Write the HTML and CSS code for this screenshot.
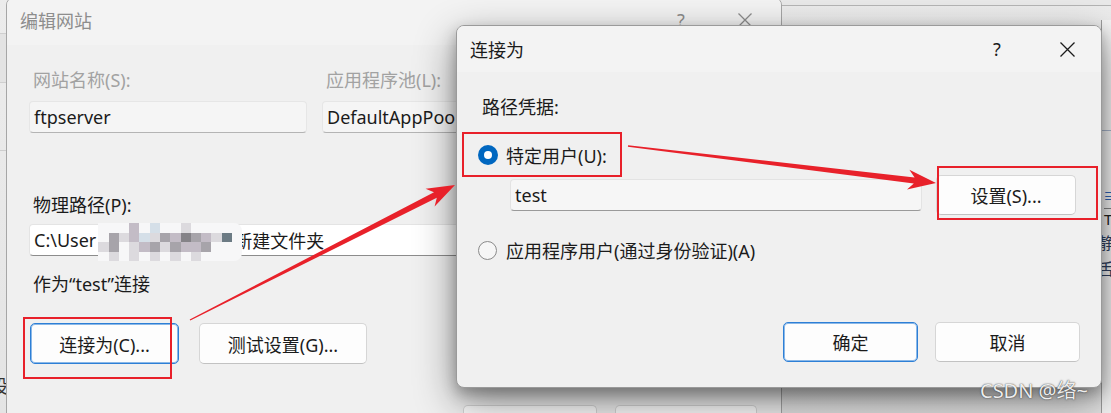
FILE: index.html
```html
<!DOCTYPE html>
<html lang="zh-CN">
<head>
<meta charset="utf-8">
<title>连接为</title>
<link rel="stylesheet" href="styles.css">
</head>
<body>
<div class="desktop">
  <div class="bw-top"></div>
  <div class="bw-leftbar"></div>
  <div class="bw-leftline"></div>
  <div class="bw-leftchar">设</div>
  <div class="bw-right">
    <div class="bw-r-line"></div>
    <div class="bw-r-icon">≡</div>
    <div class="bw-r-t">T</div>
    <div class="bw-r-c1">静</div>
    <div class="bw-r-c2">舌</div>
  </div>

  <section class="win outer">
    <header class="titlebar">
      <span class="title">编辑网站</span>
      <span class="tb-help">?</span>
      <span class="tb-close"><svg width="14" height="14" viewBox="0 0 14 14"><path d="M0.5 0.5L13.5 13.5M13.5 0.5L0.5 13.5" stroke="currentColor" stroke-width="1.3" fill="none"/></svg></span>
    </header>
    <div class="body">
      <div class="fields">
        <div class="field f-name">
          <div class="lbl disabled">网站名称(S):</div>
          <div class="input disabled">ftpserver</div>
        </div>
        <div class="field f-pool">
          <div class="lbl disabled">应用程序池(L):</div>
          <div class="input disabled">DefaultAppPool</div>
        </div>
      </div>
      <div class="lbl path-lbl">物理路径(P):</div>
      <div class="input path"><span>C:\User</span><span class="redact"><span class="mosaic">
        <i class="m1"></i><i class="m1"></i><i class="m1"></i><i class="m3"></i><i class="m1"></i><i class="m6"></i><i class="m1"></i><i class="m1"></i><i class="m2"></i><i class="m1"></i><i class="m1"></i><i class="m1"></i><i class="m1"></i><i class="m1"></i>
        <i class="m1"></i><i class="m4"></i><i class="m2"></i><i class="m3"></i><i class="m6"></i><i class="m2"></i><i class="m4"></i><i class="m3"></i><i class="m5"></i><i class="m4"></i><i class="m3"></i><i class="m2"></i><i class="m7"></i><i class="m1"></i>
        <i class="m2"></i><i class="m4"></i><i class="m1"></i><i class="m2"></i><i class="m3"></i><i class="m4"></i><i class="m2"></i><i class="m4"></i><i class="m3"></i><i class="m3"></i><i class="m4"></i><i class="m1"></i><i class="m1"></i><i class="m1"></i>
        <i class="m1"></i><i class="m2"></i><i class="m1"></i><i class="m2"></i><i class="m1"></i><i class="m2"></i><i class="m1"></i><i class="m2"></i><i class="m1"></i><i class="m2"></i><i class="m1"></i><i class="m1"></i><i class="m1"></i><i class="m1"></i>
      </span></span><span>新建文件夹</span></div>
      <div class="lbl as-lbl">作为“test”连接</div>
      <div class="btn-row">
        <button class="btn default w-connect">连接为(C)...</button>
        <button class="btn w-test">测试设置(G)...</button>
      </div>
      <div class="footer outer-footer">
        <button class="btn w-ok2">确定</button>
        <button class="btn w-cancel2">取消</button>
      </div>
    </div>
  </section>

  <section class="win connect">
    <header class="titlebar">
      <span class="title">连接为</span>
      <span class="tb-help">?</span>
      <span class="tb-close"><svg width="15" height="15" viewBox="0 0 15 15"><path d="M0.5 0.5L14.5 14.5M14.5 0.5L0.5 14.5" stroke="currentColor" stroke-width="1.3" fill="none"/></svg></span>
    </header>
    <div class="body">
      <div class="lbl cred-lbl">路径凭据:</div>
      <div class="radio-row r1">
        <span class="radio on"></span>
        <span>特定用户(U):</span>
      </div>
      <div class="user-row">
        <div class="input user">test</div>
        <button class="btn w-set">设置(S)...</button>
      </div>
      <div class="radio-row r2">
        <span class="radio off"></span>
        <span>应用程序用户(通过身份验证)(A)</span>
      </div>
      <div class="footer">
        <button class="btn default w-ok">确定</button>
        <button class="btn w-cancel">取消</button>
      </div>
    </div>
  </section>

  <div class="redbox rb-user"></div>
  <div class="redbox rb-set"></div>
  <div class="redbox rb-connect"></div>

  <svg class="arrows" width="1111" height="413" viewBox="0 0 1111 413">
    <polygon points="189.7,319.4 434.0,192.3 425.6,188.8 455,185 434.6,206.6 436.8,197.7 190.3,320.6" />
    <polygon points="628.1,145.3 914.6,177.4 909.4,169.8 936,183 907.0,189.6 913.8,183.4 627.9,146.7" />
  </svg>

  <div class="watermark">CSDN @络~</div>
</div>
</body>
</html>
```

FILE: styles.css
```css
* { box-sizing: border-box; }
html, body { margin: 0; padding: 0; }
body {
  font-family: "Noto Sans", "Noto Sans CJK SC", sans-serif;
  font-size: 18px;
  color: #1b1b1b;
  background: #ececec;
}
.desktop {
  position: relative;
  width: 1111px;
  height: 413px;
  overflow: hidden;
  background: linear-gradient(#ececec, #e4e4e4);
}

/* background window fragments */
.bw-top {
  position: absolute; left: 770px; right: 0; top: 0; height: 6px;
  background: #e9e9e9; border-bottom: 1px solid #b4b4b4;
}
.bw-leftbar {
  position: absolute; left: 0; top: 33px; width: 8px; height: 50px;
  background: #e3e3e3; border-top: 1px solid #cfcfcf; border-bottom: 1px solid #cfcfcf;
}
.bw-leftline { position: absolute; left: 0; top: 150px; width: 8px; border-top: 1px solid #cdcdcd; }
.bw-leftchar { position: absolute; left: -10px; top: 372px; font-size: 18px; color: #333; }
.bw-right {
  position: absolute; left: 1101px; top: 20px; width: 20px; bottom: 0;
  background: #f4f4f4; border-left: 1px solid #9c9c9c; overflow: hidden;
  font-size: 16px; color: #2d5fa8;
}
.bw-r-line { position: absolute; left: 0; right: 0; top: 110px; border-top: 1px solid #a8b6cc; }
.bw-r-icon { position: absolute; left: 1px; top: 163px; color: #2d64b8; }
.bw-r-t { position: absolute; left: 2px; top: 188px; color: #222; font-size: 15px; border-top: 1px solid #888; }
.bw-r-c1 { position: absolute; left: -4px; top: 210px; color: #304060; }
.bw-r-c2 { position: absolute; left: -4px; top: 236px; color: #304060; }

/* windows */
.win {
  position: absolute;
  background: #f0f0f0;
  border-radius: 8px;
  overflow: hidden;
  display: flex;
  flex-direction: column;
}
.titlebar {
  flex: none;
  display: flex;
  align-items: center;
  background: #f3f3f3;
}
.titlebar .title { flex: 1; }
.tb-help, .tb-close { display: flex; justify-content: center; align-items: center; }

.outer {
  left: 6px; top: -3px; width: 776px; height: 440px;
  border: 1px solid #a6a6a6;
}
.outer .titlebar { height: 47px; color: #8d8d8d; padding-bottom: 3px; }
.outer .titlebar .title { padding-left: 13px; }
.outer .tb-help { width: 56px; }
.outer .tb-close { width: 72px; }
.outer .body { padding: 23px 0 0 22px; }

.lbl { line-height: 24px; height: 24px; padding-left: 4px; white-space: nowrap; }
.lbl.disabled { color: #a2a2a2; }

.fields { display: flex; gap: 15px; }
.field .lbl { margin-bottom: 9px; }
.f-name { width: 278px; }
.f-pool { width: 320px; }

.input {
  height: 32px;
  border-radius: 4px;
  padding: 0 4px;
  display: flex;
  align-items: center;
  white-space: nowrap;
  background: #fbfbfb;
  border: 1px solid #e4e4e4;
  border-bottom: 1px solid #8c8c8c;
}
.input.disabled { background: #f5f5f5; border-color: #e6e6e6; border-bottom-color: #b4b4b4; }

.path-lbl { margin-top: 60px; color: #1b1b1b; }
.input.path { margin-top: 7px; width: 740px; background: #ffffff; }
.redact { position: relative; display: inline-block; width: 138px; height: 24px; }
.mosaic {
  position: absolute; left: 2px; top: -5px; width: 144px; height: 38px;
  display: grid; grid-template-columns: repeat(14, 1fr); grid-template-rows: repeat(4, 1fr);
  border-radius: 0 8px 8px 0;
  overflow: hidden;
}
.mosaic i { display: block; }
.m1 { background: #f7f7f8; }
.m2 { background: #dcdade; }
.m3 { background: #c3bcc6; }
.m4 { background: #a7a4aa; }
.m5 { background: #858388; }
.m6 { background: #d5dfe8; }
.m7 { background: #6c7b84; }

.as-lbl { margin-top: 16px; }
.btn-row { display: flex; gap: 20px; margin-top: 27px; padding-left: 1px; }

.btn {
  font: inherit;
  color: #1b1b1b;
  height: 41px;
  border-radius: 5px;
  background: #fdfdfd;
  border: 1px solid #d6d6d6;
  border-bottom-color: #c2c2c2;
  display: flex;
  align-items: center;
  justify-content: center;
  padding: 0;
}
.btn.default { border: 1px solid #2d7fd6; box-shadow: inset 0 0 0 1px rgba(45,127,214,.55); }
.w-connect { width: 149px; }
.w-test { width: 168px; }

.footer { display: flex; justify-content: flex-end; }
.outer-footer { margin-top: 41px; padding-right: 24px; gap: 18px; }
.w-ok2 { width: 134px; }
.w-cancel2 { width: 142px; }

.connect {
  left: 456px; top: 25px; width: 646px; height: 363px;
  border: 1px solid #9a9a9a;
  box-shadow: 0 14px 40px rgba(0,0,0,.45), 0 6px 14px rgba(0,0,0,.25);
}
.connect .titlebar { height: 46px; color: #1b1b1b; }
.connect .titlebar .title { padding-left: 13px; }
.connect .tb-help { width: 72px; }
.connect .tb-close { width: 68px; }
.connect .body { padding-top: 23px; }
.cred-lbl { padding-left: 25px; }
.radio-row { display: flex; align-items: center; height: 24px; padding-left: 21px; gap: 8px; white-space: nowrap; }
.r1 { margin-top: 24px; }
.r2 { margin-top: 23px; }
.radio { width: 20px; height: 20px; flex: none; border-radius: 50%; display: flex; align-items: center; justify-content: center; }
.radio.on { background: #0067c0; }
.radio.on::after { content: ""; width: 8px; height: 8px; border-radius: 50%; background: #fff; }
.radio.off { width: 19px; height: 19px; border: 1.5px solid #8a8a8a; background: #f6f6f6; margin-right: 1px; }

.user-row { display: flex; align-items: center; gap: 14px; margin-top: 8px; padding-left: 53px; height: 40px; }
.input.user { width: 412px; background: #f6f6f6; border-color: #e3e3e3; border-bottom-color: #9a9a9a; }
.w-set { width: 140px; height: 40px; }

.connect .footer { margin-top: 60px; padding-right: 21px; gap: 17px; }
.w-ok { width: 135px; height: 40px; }
.w-cancel { width: 145px; height: 40px; }

/* annotations */
.redbox { position: absolute; border: 2px solid #e8202a; }
.rb-user { left: 462px; top: 132px; width: 160px; height: 45px; }
.rb-set { left: 937px; top: 166px; width: 161px; height: 54px; }
.rb-connect { left: 23px; top: 317px; width: 149px; height: 62px; }

.arrows { position: absolute; left: 0; top: 0; pointer-events: none; }
.arrows polygon { fill: #e8212a; }

.watermark {
  position: absolute; left: 980px; top: 378px;
  font-size: 20px; line-height: 26px;
  color: rgba(255,255,255,.92);
  text-shadow: 0 0 1px rgba(50,50,50,.9), 0 0 2px rgba(50,50,50,.5);
  white-space: nowrap;
}
```
